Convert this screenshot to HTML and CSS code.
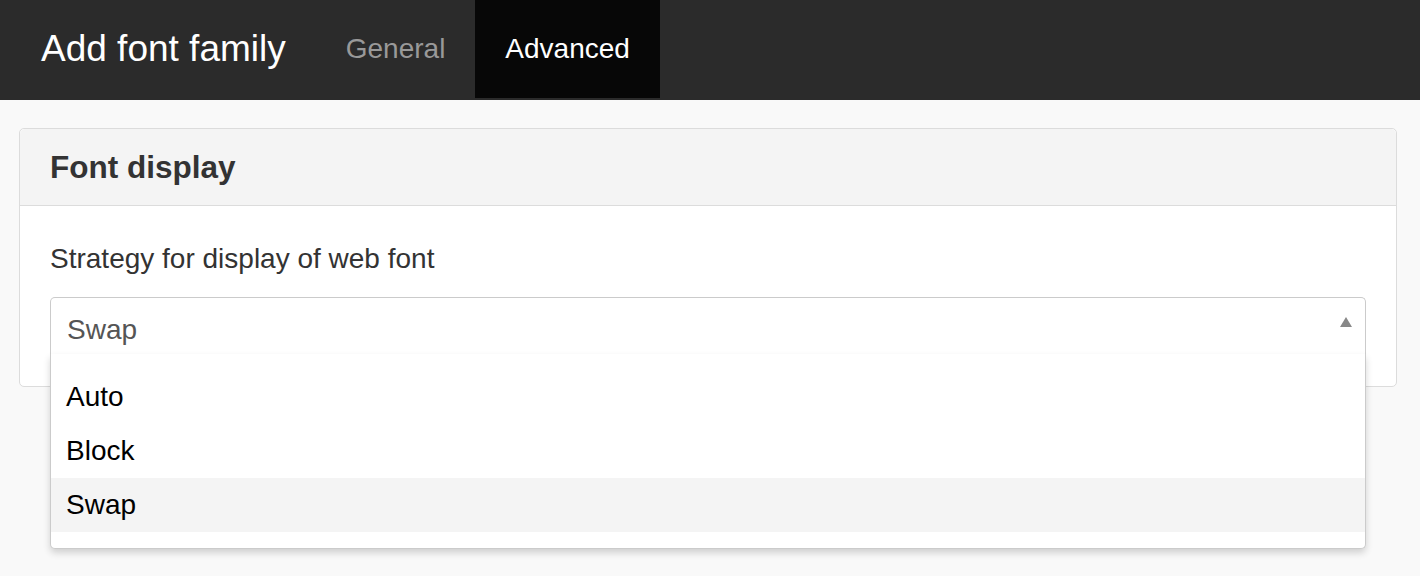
FILE: index.html
```html
<!DOCTYPE html>
<html lang="en">
<head>
<meta charset="utf-8">
<title>Add font family</title>
<link rel="stylesheet" href="styles.css">
</head>
<body>
<header class="topbar">
  <h1 class="topbar-title">Add font family</h1>
  <nav class="tabs">
    <a class="tab">General</a>
    <a class="tab tab-active">Advanced</a>
  </nav>
</header>
<main class="content">
  <section class="card">
    <div class="card-header">Font display</div>
    <div class="card-body">
      <label class="field-label">Strategy for display of web font</label>
      <div class="combo">
        <span class="combo-value">Swap</span>
        <span class="combo-arrow"></span>
        <ul class="combo-list">
          <li class="combo-option">Auto</li>
          <li class="combo-option">Block</li>
          <li class="combo-option combo-option-selected">Swap</li>
        </ul>
      </div>
    </div>
  </section>
</main>
</body>
</html>
```
FILE: styles.css
```css
* { box-sizing: border-box; }

html, body {
  min-height: 100%;
  height: 100%;
}

body {
  margin: 0;
  min-height: 576px;
  background: #f9f9f9;
  font-family: "Liberation Sans", Arial, sans-serif;
  color: #333;
}

.topbar {
  display: flex;
  align-items: flex-start;
  height: 100px;
  background: #2b2b2b;
}

.topbar-title {
  margin: 0;
  padding: 0 30px 0 41px;
  font-size: 37px;
  font-weight: normal;
  line-height: 98px;
  color: #fff;
}

.tabs {
  display: flex;
}

.tab {
  display: block;
  padding: 0 30px;
  font-size: 28px;
  line-height: 98px;
  height: 98px;
  color: #999;
}

.tab-active {
  background: #070707;
  color: #fff;
}

.content {
  padding: 28px 23px 0 19px;
}

.card {
  background: #fff;
  border: 1px solid #dcdcdc;
  border-radius: 5px;
}

.card-header {
  background: #f4f4f4;
  border-bottom: 1px solid #dcdcdc;
  border-radius: 5px 5px 0 0;
  padding: 0 30px;
  font-size: 31.5px;
  font-weight: bold;
  line-height: 76px;
  color: #333;
}

.card-body {
  padding: 37px 30px 32px;
}

.field-label {
  display: block;
  font-size: 28px;
  line-height: 32px;
  color: #333;
  margin-bottom: 22px;
}

.combo {
  position: relative;
  height: 57px;
  border: 1px solid #cbcbcb;
  border-bottom: none;
  border-radius: 5px 5px 0 0;
  background: #fff;
  padding: 0 16px;
}

.combo-value {
  display: block;
  padding-top: 7px;
  font-size: 28px;
  line-height: 50px;
  color: #555;
}

.combo-arrow {
  position: absolute;
  top: 19px;
  right: 13px;
  width: 0;
  height: 0;
  border-left: 6px solid transparent;
  border-right: 6px solid transparent;
  border-bottom: 10px solid #888;
}

.combo-list {
  position: absolute;
  z-index: 10;
  top: 100%;
  left: -1px;
  right: -1px;
  margin: 0;
  padding: 16px 0;
  list-style: none;
  background: #fff;
  border: 1px solid #cbcbcb;
  border-top: none;
  border-radius: 0 0 5px 5px;
  box-shadow: 0 4px 7px rgba(0, 0, 0, 0.16);
}

.combo-option {
  height: 54px;
  padding: 0 15px;
  font-size: 28px;
  line-height: 54px;
  color: #000;
}

.combo-option-selected {
  background: #f4f4f4;
}
```
